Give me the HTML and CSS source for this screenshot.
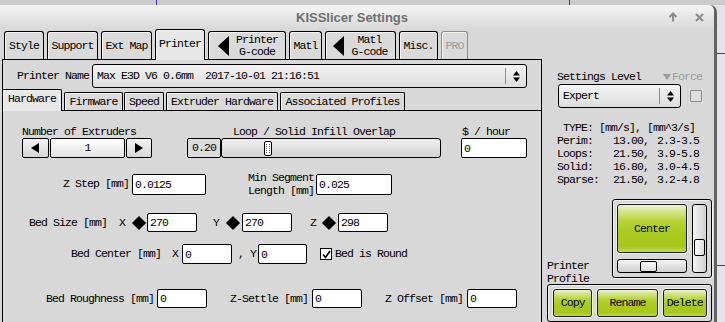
FILE: index.html
```html
<!DOCTYPE html>
<html lang="en">
<head>
    <meta charset="UTF-8">
    <meta name="viewport" content="width=device-width, initial-scale=1.0">
    <title>KISSlicer Settings</title>
    <link rel="stylesheet" href="styles.css">
</head>
<body>
    <div class="desk-top"></div>
    <div class="window">
        <div class="titlebar">
            <div class="tb-side"></div>
            <div class="title">KISSlicer Settings</div>
            <div class="tb-side tb-btns">
                <svg width="10" height="10" viewBox="0 0 10 10"><path d="M5 9.5V1.5M1.5 5L5 1.5L8.5 5" fill="none" stroke="#8c8c8c" stroke-width="2"/></svg>
                <svg width="9" height="9" viewBox="0 0 9 9"><path d="M1 1L8 8M8 1L1 8" stroke="#8c8c8c" stroke-width="2"/></svg>
            </div>
        </div>

        <div class="content">
            <div class="main">
                <div class="tabs">
                    <div class="tab w-style">Style</div>
                    <div class="tab w-support">Support</div>
                    <div class="tab w-extmap">Ext Map</div>
                    <div class="tab on w-printer">Printer</div>
                    <div class="tab gtab w-pg"><i class="big-tri"></i><span class="two">Printer<br>G-code</span></div>
                    <div class="tab w-matl">Matl</div>
                    <div class="tab gtab w-mg"><i class="big-tri"></i><span class="two">Matl<br>G-code</span></div>
                    <div class="tab w-misc">Misc.</div>
                    <div class="tab off w-pro">PRO</div>
                </div>

                <div class="panel">
                    <div class="name-row">
                        <span>Printer Name</span>
                        <div class="combo combo-name">
                            <span class="combo-text">Max E3D V6 0.6mm  2017-10-01 21:16:51</span>
                            <span class="combo-arrows"><svg width="7" height="11" viewBox="0 0 7 11"><path d="M0 4.5L3.5 0L7 4.5ZM0 6.5L3.5 11L7 6.5Z"/></svg></span>
                        </div>
                    </div>

                    <div class="subtabs">
                        <div class="stab on st-hw">Hardware</div>
                        <div class="stab st-fw">Firmware</div>
                        <div class="stab st-sp">Speed</div>
                        <div class="stab st-ex">Extruder Hardware</div>
                        <div class="stab st-as">Associated Profiles</div>
                    </div>

                    <div class="hw">
                        <div class="row row-a">
                            <div class="col ext">
                                <span class="cap">Number of Extruders</span>
                                <div class="spin">
                                    <span class="sbtn sb-l"><i class="tri-l"></i></span>
                                    <span class="sval">1</span>
                                    <span class="sbtn sb-r"><i class="tri-r"></i></span>
                                </div>
                            </div>
                            <div class="col overlap">
                                <span class="cap mid">Loop / Solid Infill Overlap</span>
                                <div class="slide-row">
                                    <span class="valbox">0.20</span>
                                    <div class="track"><span class="thumb"></span></div>
                                </div>
                            </div>
                            <div class="col rate">
                                <span class="cap">$ / hour</span>
                                <input class="field f-rate" value="0">
                            </div>
                        </div>

                        <div class="row row-b">
                            <span class="zstep-lbl">Z Step [mm]</span>
                            <input class="field f-zstep" value="0.0125">
                            <span class="seg-lbl">Min Segment<br>Length [mm]</span>
                            <input class="field f-seg" value="0.025">
                        </div>

                        <div class="row row-c">
                            <span class="bs-lbl">Bed Size [mm]</span>
                            <span class="axis ax-x">X</span><span class="dia"><i></i></span>
                            <input class="field f-50 ml-1" value="270">
                            <span class="axis ax-y">Y</span><span class="dia"><i></i></span>
                            <input class="field f-50 ml-2" value="270">
                            <span class="axis ax-z">Z</span><span class="dia dia-z"><i></i></span>
                            <input class="field f-50 ml-2" value="298">
                        </div>

                        <div class="row row-d">
                            <span class="bc-lbl">Bed Center [mm]</span>
                            <span class="bc-x">X</span>
                            <input class="field f-50 ml-4" value="0">
                            <span class="bc-y">, Y</span>
                            <input class="field f-49 ml-2" value="0">
                            <span class="chk"><svg width="9" height="9" viewBox="0 0 9 9"><path d="M1 4.5L3.5 7.5L8 1" fill="none" stroke="#000" stroke-width="1.6"/></svg></span>
                            <span class="chk-lbl">Bed is Round</span>
                        </div>

                        <div class="row row-e">
                            <span class="br-lbl">Bed Roughness [mm]</span>
                            <input class="field f-50 ml-3" value="0">
                            <span class="zs-lbl">Z-Settle [mm]</span>
                            <input class="field f-50 ml-4" value="0">
                            <span class="zs-lbl">Z Offset [mm]</span>
                            <input class="field f-50 ml-4" value="0">
                        </div>
                    </div>
                </div>
            </div>

            <div class="side">
                <div class="lvl-head">
                    <span>Settings Level</span>
                    <span class="force"><i class="tri-d"></i>Force</span>
                </div>
                <div class="lvl-row">
                    <div class="combo combo-lvl">
                        <span class="combo-text">Expert</span>
                        <span class="combo-arrows"><svg width="7" height="11" viewBox="0 0 7 11"><path d="M0 4.5L3.5 0L7 4.5ZM0 6.5L3.5 11L7 6.5Z"/></svg></span>
                    </div>
                    <span class="chk-off"></span>
                </div>

                <div class="stats">
                    <div class="stats-head">TYPE: [mm/s], [mm^3/s]</div>
                    <span>Perim:</span><span class="v">13.00,</span><span>2.3-3.5</span>
                    <span>Loops:</span><span class="v">21.50,</span><span>3.9-5.8</span>
                    <span>Solid:</span><span class="v">16.80,</span><span>3.0-4.5</span>
                    <span>Sparse:</span><span class="v">21.50,</span><span>3.2-4.8</span>
                </div>

                <div class="view-row">
                    <div class="prof-lbl">Printer<br>Profile</div>
                    <div class="view-frame">
                        <div class="gbtn center-btn">Center</div>
                        <div class="vscroll"><span class="vthumb"></span></div>
                        <div class="hscroll"><span class="hthumb"></span></div>
                    </div>
                </div>

                <div class="btn-frame">
                    <div class="gbtn b-copy">Copy</div>
                    <div class="gbtn b-rename">Rename</div>
                    <div class="gbtn b-delete">Delete</div>
                </div>
            </div>
        </div>
    </div>
</body>
</html>
```

FILE: styles.css
```css
* {
    box-sizing: border-box;
}
body {
    margin: 0;
    width: 725px;
    height: 322px;
    overflow: hidden;
    background:
        linear-gradient(180deg, transparent 53px, #3a3aa6 53px, #3a3aa6 54px, transparent 54px),
        linear-gradient(180deg, transparent 265px, #3a3aa6 265px, #3a3aa6 266px, transparent 266px),
        #e3e3e9;
    font-family: "Liberation Mono", "DejaVu Sans Mono", monospace;
    font-size: 11.5px;
    letter-spacing: -0.9px;
    line-height: 12px;
    color: #000;
}
.desk-top {
    height: 5px;
    background:
        linear-gradient(90deg, transparent 156px, #3a3aa6 156px, #3a3aa6 157px, transparent 157px),
        linear-gradient(90deg, transparent 569px, #3a3aa6 569px, #3a3aa6 570px, transparent 570px),
        #cbcbcb;
}
.window {
    width: 717px;
    height: 317px;
    background: #d8d8d8;
    border-right: 3px solid #626262;
    border-top-right-radius: 7px;
}

/* title bar */
.titlebar {
    display: flex;
    align-items: center;
    height: 24px;
    background: linear-gradient(#f5f5f5, #d8d8d8);
    border-top-right-radius: 6px;
}
.tb-side {
    flex: 1;
}
.title {
    font: bold 13px "Liberation Sans", Arial, sans-serif;
    letter-spacing: 0;
    color: #6f6f6f;
}
.tb-btns {
    display: flex;
    justify-content: flex-end;
    align-items: center;
    gap: 17px;
    padding-right: 10px;
}

.content {
    display: flex;
    height: 293px;
}
.main {
    width: 542px;
    display: flex;
    flex-direction: column;
}

/* top tabs */
.tabs {
    display: flex;
    align-items: flex-end;
    gap: 3px;
    height: 30px;
    padding-left: 4px;
}
.tab {
    height: 28px;
    border: 1px solid #000;
    border-bottom: none;
    border-radius: 3px 3px 0 0;
    background: #dadada;
    box-shadow: inset 1px 1px 0 #f3f3f3;
    display: flex;
    align-items: center;
    justify-content: center;
}
.tab.on {
    height: 31px;
    margin-bottom: -1px;
    background: #e7e7e7;
    position: relative;
    z-index: 1;
    padding-bottom: 3px;
}
.tab.off {
    border-color: #8c8c8c;
    color: #9c9c9c;
}
.gtab {
    justify-content: flex-start;
}
.two {
    flex: 1;
    text-align: center;
}
.big-tri {
    width: 0;
    height: 0;
    border-right: 11px solid #000;
    border-top: 10px solid transparent;
    border-bottom: 10px solid transparent;
}
.w-style { width: 40px; }
.w-support { width: 51px; }
.w-extmap { width: 51px; }
.w-printer { width: 50px; }
.w-pg { width: 78px; }
.w-pg .big-tri { margin-left: 9px; }
.w-matl { width: 33px; }
.w-mg { width: 71px; }
.w-mg .big-tri { margin-left: 7px; }
.w-misc { width: 39px; }
.w-pro { width: 27px; }

/* printer panel */
.panel {
    flex: 1;
    margin-left: 2px;
    border: 1px solid #000;
    border-bottom: none;
    display: flex;
    flex-direction: column;
}
.name-row {
    display: flex;
    align-items: center;
    height: 24px;
    margin-top: 4px;
    padding-left: 14px;
}
.combo {
    display: flex;
    align-items: center;
    height: 24px;
    border: 1px solid #000;
    border-radius: 3px;
    background: linear-gradient(#f3f3f3, #dedede);
    white-space: pre;
}
.combo-text {
    flex: 1;
    padding-left: 4px;
}
.combo-arrows {
    width: 21px;
    height: 16px;
    border-left: 1px solid #8a8a8a;
    display: flex;
    align-items: center;
    justify-content: center;
}
.combo-name {
    width: 435px;
    margin-left: 3px;
}

/* sub tabs */
.subtabs {
    display: flex;
    align-items: flex-end;
    height: 22px;
    margin-top: 1px;
    border-bottom: 1px solid #000;
}
.stab {
    height: 18px;
    border: 1px solid #000;
    border-bottom: none;
    border-radius: 2px 2px 0 0;
    background: #dadada;
    box-shadow: inset 1px 1px 0 #f3f3f3;
    display: flex;
    align-items: center;
    justify-content: center;
}
.stab.on {
    height: 22px;
    margin-bottom: -1px;
    background: #e7e7e7;
    position: relative;
    z-index: 1;
    padding-bottom: 3px;
}
.st-hw { width: 60px; margin-left: -1px; }
.st-fw { width: 59px; margin-left: 2px; }
.st-sp { width: 40px; margin-left: 1px; }
.st-ex { width: 112px; margin-left: 2px; }
.st-as { width: 125px; margin-left: 2px; }

/* hardware page */
.hw {
    display: flex;
    flex-direction: column;
}
.row {
    display: flex;
    align-items: center;
}
.col {
    display: flex;
    flex-direction: column;
}
.cap {
    height: 12px;
}
.cap.mid {
    text-align: center;
}
.field {
    height: 20px;
    padding: 0 0 0 2px;
    border: 1px solid #000;
    border-radius: 2px;
    background: #fff;
    font: inherit;
    letter-spacing: inherit;
    color: #000;
    outline: none;
}
.row-a {
    margin-top: 15px;
    align-items: flex-start;
}
.ext {
    margin-left: 19px;
}
.spin {
    display: flex;
    height: 20px;
}
.sbtn {
    width: 27px;
    border: 1px solid #000;
    border-radius: 2px;
    background: linear-gradient(#f4f4f4, #d6d6d6);
    display: flex;
    align-items: center;
    justify-content: center;
}
.sb-r {
    width: 26px;
    margin-left: 1px;
}
.sval {
    width: 75px;
    margin-left: 1px;
    border: 1px solid #000;
    border-radius: 2px;
    background: linear-gradient(#ffffff, #e2e2e2);
    text-align: center;
    line-height: 18px;
}
.tri-l {
    border-right: 8px solid #000;
    border-top: 5px solid transparent;
    border-bottom: 5px solid transparent;
    margin-right: 2px;
}
.tri-r {
    border-left: 8px solid #000;
    border-top: 5px solid transparent;
    border-bottom: 5px solid transparent;
}
.overlap {
    margin-left: 35px;
    width: 254px;
}
.slide-row {
    display: flex;
    height: 20px;
}
.valbox {
    width: 34px;
    border: 1px solid #000;
    border-radius: 2px;
    background: #dcdcdc;
    padding-left: 4px;
    line-height: 18px;
}
.track {
    flex: 1;
    border: 1px solid #000;
    border-radius: 3px;
    background: linear-gradient(#efefef, #d4d4d4);
    display: flex;
    align-items: center;
    padding-left: 42px;
}
.thumb {
    width: 8px;
    height: 15px;
    border: 1px solid #000;
    border-radius: 2px;
    background: #fff;
}
.thumb::before {
    content: "";
    display: block;
    height: 9px;
    margin: 2px 1px 0;
    border-left: 1px dotted #555;
    border-right: 1px dotted #555;
}
.rate {
    margin-left: 20px;
}
.rate .cap {
    padding-left: 1px;
}
.f-rate {
    width: 66px;
}

.row-b {
    margin-top: 13px;
    height: 26px;
}
.zstep-lbl {
    margin-left: 60px;
}
.f-zstep {
    width: 74px;
    height: 21px;
    margin-left: 3px;
}
.seg-lbl {
    margin-left: 42px;
    text-align: right;
    line-height: 13px;
}
.f-seg {
    width: 76px;
    height: 21px;
    margin-left: 2px;
}

.row-c {
    margin-top: 16px;
    height: 19px;
}
.row-c .field {
    height: 19px;
}
.bs-lbl {
    margin-left: 26px;
}
.ax-x { margin-left: 12px; }
.ax-y { margin-left: 16px; }
.ax-z { margin-left: 18px; }
.dia {
    width: 14px;
    height: 14px;
    margin-left: 7px;
    display: flex;
    align-items: center;
    justify-content: center;
}
.dia-z {
    margin-left: 6px;
}
.dia i {
    width: 10px;
    height: 10px;
    background: #000;
    transform: rotate(45deg);
}
.f-50 { width: 50px; }
.f-49 { width: 49px; }
.ml-1 { margin-left: 1px; }
.ml-2 { margin-left: 2px; }
.ml-3 { margin-left: 3px; }
.ml-4 { margin-left: 4px; }

.row-d {
    margin-top: 12px;
    height: 20px;
}
.bc-lbl {
    margin-left: 68px;
}
.bc-x {
    margin-left: 11px;
}
.bc-y {
    margin-left: 6px;
}
.chk {
    width: 12px;
    height: 12px;
    margin-left: 13px;
    border: 1px solid #000;
    background: #fff;
    display: flex;
    align-items: center;
    justify-content: center;
}
.chk-lbl {
    margin-left: 3px;
}

.row-e {
    margin-top: 25px;
    height: 19px;
}
.row-e .field {
    height: 19px;
}
.br-lbl {
    margin-left: 43px;
}
.zs-lbl {
    margin-left: 23px;
}

/* right column */
.side {
    width: 172px;
    display: flex;
    flex-direction: column;
}
.lvl-head {
    display: flex;
    align-items: center;
    height: 12px;
    margin-top: 42px;
    padding-left: 15px;
}
.force {
    margin-left: 22px;
    color: #9a9a9a;
    display: flex;
    align-items: center;
}
.tri-d {
    border-top: 6px solid #9a9a9a;
    border-left: 4.5px solid transparent;
    border-right: 4.5px solid transparent;
    margin-right: 1px;
}
.lvl-row {
    display: flex;
    align-items: center;
    margin-top: 1px;
}
.combo-lvl {
    width: 123px;
    margin-left: 16px;
}
.chk-off {
    width: 12px;
    height: 12px;
    margin-left: 9px;
    border: 1px solid #8c8c8c;
    border-radius: 1px;
    background: #dedede;
}
.stats {
    display: grid;
    grid-template-columns: 48px 36px 60px;
    column-gap: 8px;
    margin: 13px 0 0 15px;
    line-height: 13px;
    white-space: pre;
}
.stats-head {
    grid-column: 1 / -1;
    padding-left: 6px;
}
.stats .v {
    text-align: right;
}

.view-row {
    display: flex;
    align-items: flex-start;
    height: 85px;
    margin-top: 13px;
}
.prof-lbl {
    margin: 60px 0 0 5px;
    width: 42px;
    line-height: 13px;
}
.view-frame {
    margin-left: 23px;
    width: 100px;
    height: 79px;
    padding: 4px;
    border: 1px solid #000;
    border-radius: 3px;
    box-shadow: inset 1px 1px 0 #f2f2f2, 1px 1px 0 #f2f2f2;
    display: grid;
    grid-template-columns: 70px 15px;
    grid-template-rows: 49px 14px;
    column-gap: 5px;
    row-gap: 6px;
}
.gbtn {
    border: 1px solid #1a1a1a;
    border-radius: 3px;
    box-shadow: 0 0 0 1px #efefef;
    background: linear-gradient(#eef5d2 0%, #d3e68a 14%, #b7d231 36%, #aac91d 60%, #a8c61d 88%, #c3db57 100%);
    display: flex;
    align-items: center;
    justify-content: center;
}
.vscroll {
    grid-row: 1 / 3;
    grid-column: 2;
    border: 1px solid #000;
    border-radius: 3px;
    background: linear-gradient(90deg, #f4f4f4, #cfcfcf);
    display: flex;
    flex-direction: column;
    align-items: center;
}
.vthumb {
    width: 11px;
    height: 17px;
    margin-top: 34px;
    border: 1px solid #000;
    border-radius: 2px;
    background: linear-gradient(90deg, #fbfbfb, #dcdcdc);
}
.hscroll {
    border: 1px solid #000;
    border-radius: 3px;
    background: linear-gradient(#f4f4f4, #cfcfcf);
    display: flex;
    align-items: center;
}
.hthumb {
    width: 17px;
    height: 11px;
    margin-left: 22px;
    border: 1px solid #000;
    border-radius: 2px;
    background: linear-gradient(#fbfbfb, #dcdcdc);
}
.btn-frame {
    margin-left: 5px;
    width: 165px;
    height: 60px;
    padding: 4px 4px 0 5px;
    border: 1px solid #000;
    border-radius: 3px;
    box-shadow: inset 1px 1px 0 #f2f2f2;
    display: flex;
    align-items: flex-start;
    gap: 5px;
}
.btn-frame .gbtn {
    height: 28px;
}
.b-copy { width: 40px; }
.b-rename { width: 61px; }
.b-delete { width: 45px; }
```
